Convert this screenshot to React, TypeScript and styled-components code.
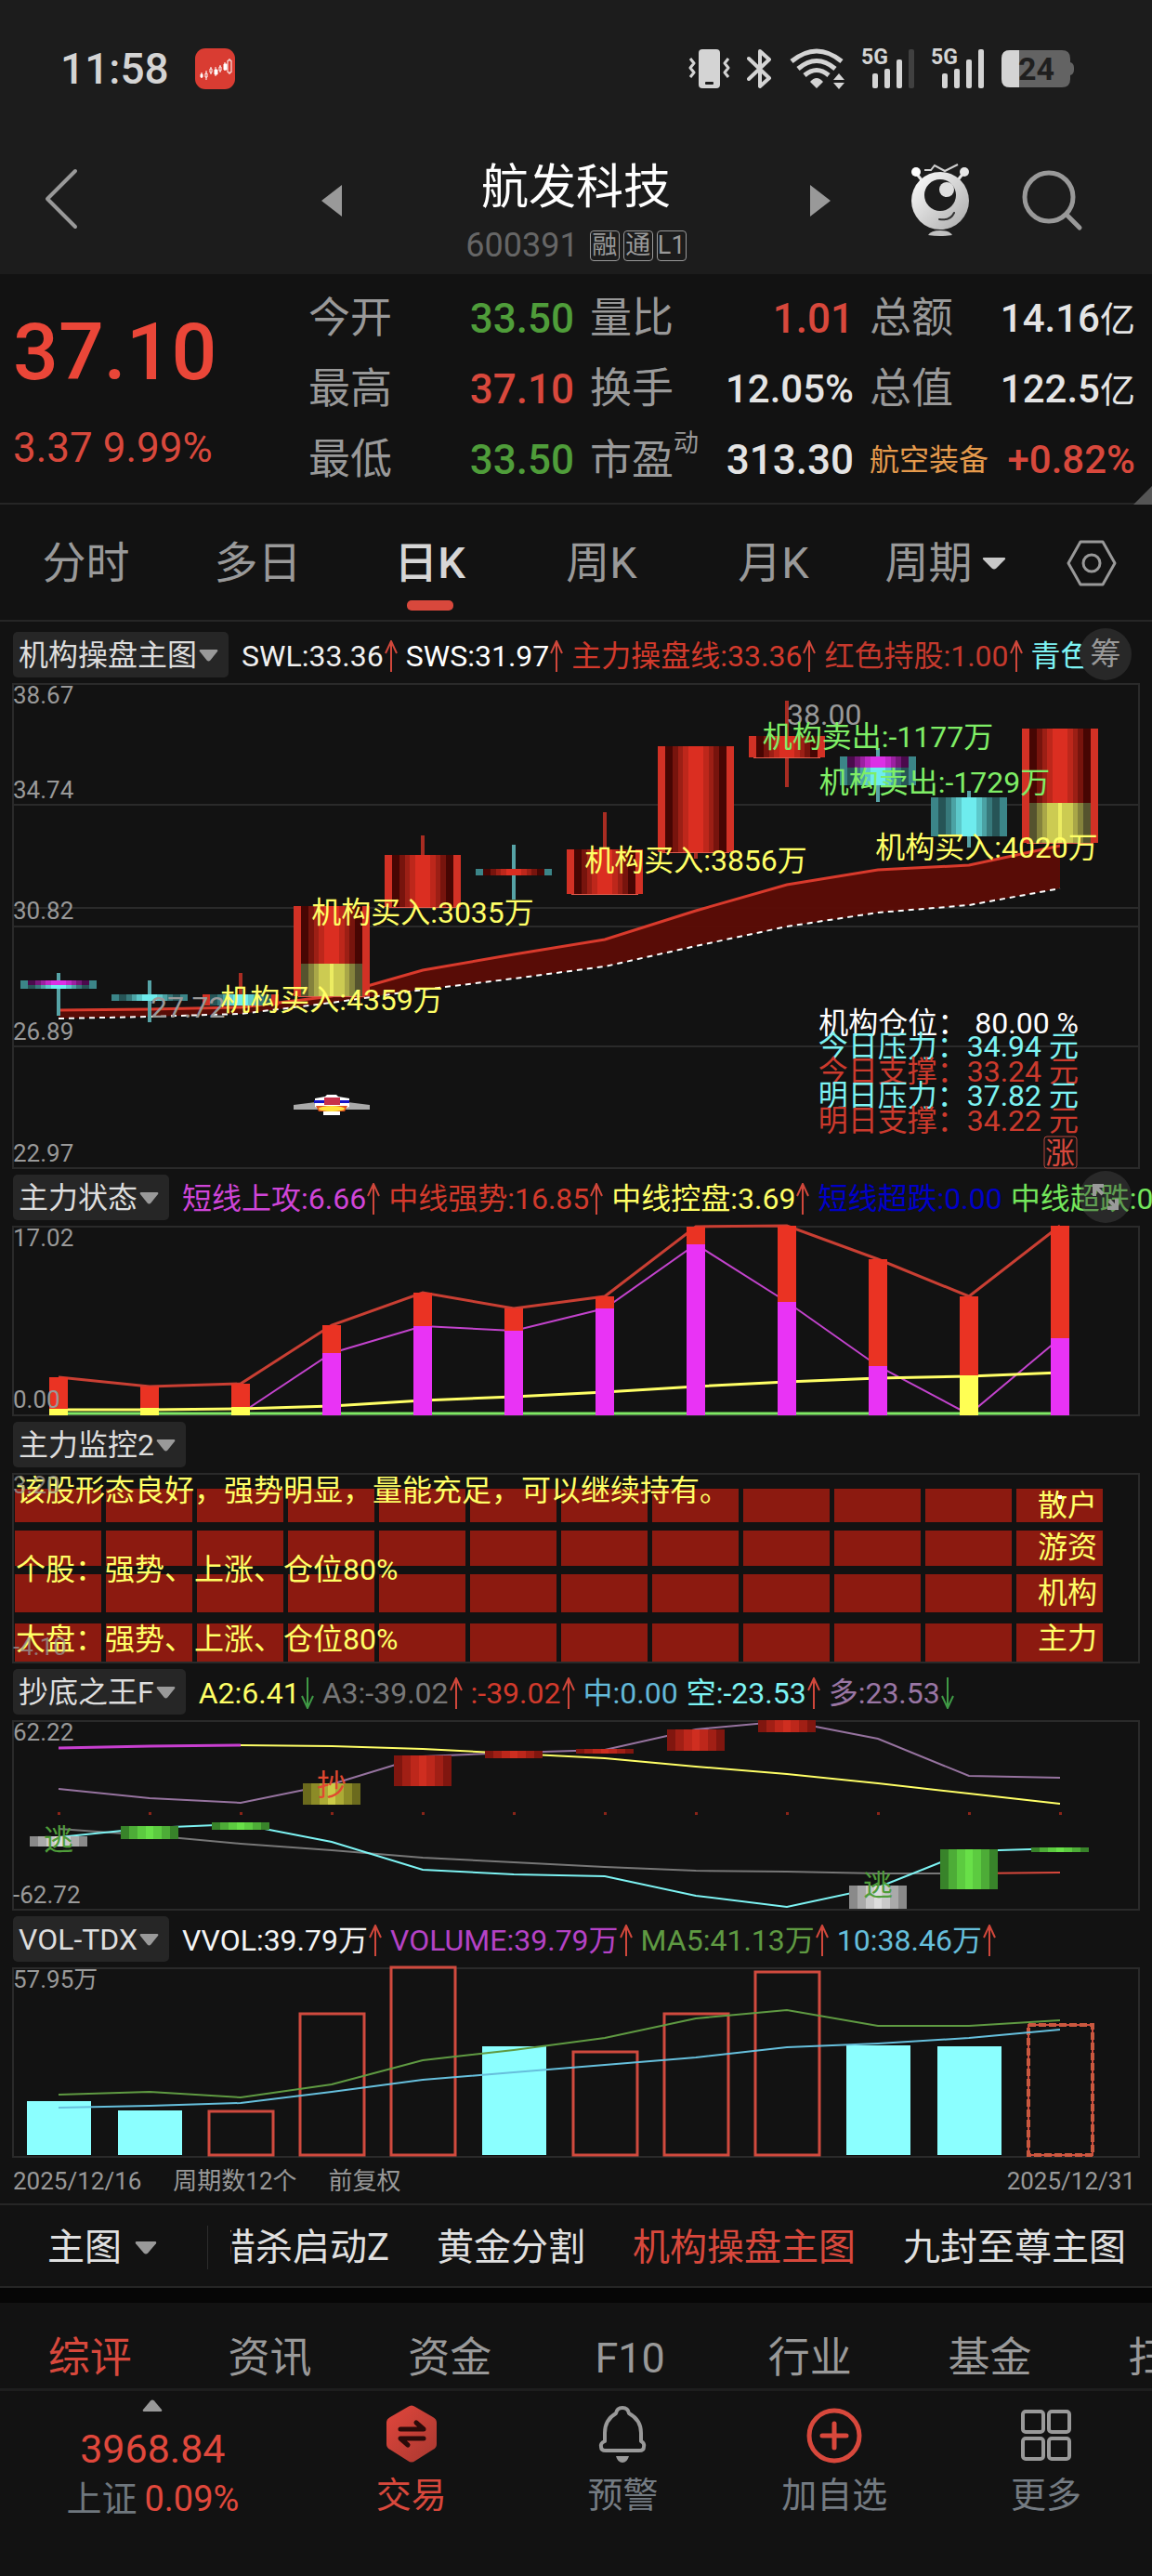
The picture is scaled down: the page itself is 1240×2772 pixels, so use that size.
import React from "react";
import styled, { createGlobalStyle, css } from "styled-components";

const GlobalStyle = createGlobalStyle`
  *, *::before, *::after { box-sizing: border-box; }
  body {
    margin: 0;
    background: #121212;
    color: #e0e0e0;
    font-family: Roboto, "Noto Sans CJK SC", sans-serif;
  }
  button {
    margin: 0;
    padding: 0;
    border: 0;
    background: none;
    color: inherit;
    font: inherit;
    cursor: pointer;
  }
  svg { display: block; flex: none; }
`;

const RED = "#d8483c";
const GREEN = "#4f9d3a";
const GREY = "#999999";
const YELLOW = "#ffff66";
const CYAN = "#7df3f3";
const LINE = "#262626";

/* ---------- status bar and title ---------- */

const Top = styled.header`
  background: #1c1c1c;
`;

const StatusBar = styled.div`
  display: flex;
  align-items: center;
  height: 148px;
  padding: 0 84px 0 65px;
  color: #d4d4d4;
`;

const Clock = styled.time`
  font-size: 46px;
  line-height: 54px;
  font-weight: 500;
  margin-right: 28px;
`;

const StatusIcons = styled.div`
  display: flex;
  align-items: center;
  gap: 18px;
  margin-left: auto;
`;

const TitleBar = styled.div`
  display: grid;
  grid-template-columns: 1fr 548px 1fr;
  align-items: center;
  height: 147px;
  padding-bottom: 11px;
`;

const BackCell = styled.div`
  padding-left: 48px;
`;

const TitleCell = styled.div`
  display: flex;
  align-items: center;
  justify-content: space-between;
`;

const TitleBlock = styled.div`
  padding-top: 24px;
`;

const ActionCell = styled.div`
  display: flex;
  align-items: center;
  gap: 56px;
  padding-left: 86px;
`;

const StockName = styled.h1`
  margin: 0;
  color: #ffffff;
  font-size: 51px;
  line-height: 60px;
  font-weight: 400;
  text-align: center;
`;

const CodeRow = styled.div`
  display: flex;
  align-items: center;
  justify-content: center;
  gap: 4px;
  margin-top: 12px;
  color: #666666;
  font-size: 36px;
  line-height: 40px;
`;

const Code = styled.span`
  margin-right: 8px;
`;

const Tag = styled.span`
  width: 32px;
  height: 33px;
  border: 1px solid ${GREY};
  border-radius: 4px;
  color: ${GREY};
  font-size: 27px;
  line-height: 31px;
  text-align: center;
`;

/* ---------- quote panel ---------- */

const Quote = styled.section`
  position: relative;
  display: flex;
  height: 248px;
  border-bottom: 2px solid ${LINE};
`;

const PriceBlock = styled.div`
  flex: none;
  width: 332px;
  padding: 34px 0 0 14px;
  color: ${RED};
`;

const Price = styled.div`
  color: #ea4638;
  font-size: 86px;
  line-height: 100px;
  font-weight: 500;
`;

const Change = styled.div`
  margin-top: 28px;
  font-size: 44px;
  line-height: 50px;
`;

const Stats = styled.dl`
  flex: 1;
  display: grid;
  grid-template-columns: 286fr 284fr 286fr;
  grid-auto-rows: 76px;
  column-gap: 17px;
  margin: 0;
  padding: 10px 18px 0 0;
`;

const Stat = styled.div`
  display: flex;
  align-items: center;
  justify-content: space-between;
`;

const StatLabel = styled.dt<{ $accent?: boolean }>`
  color: ${(p) => (p.$accent ? "#e59a4c" : GREY)};
  font-size: ${(p) => (p.$accent ? 32 : 45)}px;
  line-height: 60px;
  white-space: nowrap;

  sup {
    font-size: 27px;
    line-height: 27px;
    vertical-align: 25px;
  }
`;

const StatValue = styled.dd<{ $color?: string; $small?: boolean }>`
  margin: 0;
  color: ${(p) => p.$color ?? "#e4e4e4"};
  font-size: ${(p) => (p.$small ? 42 : 44)}px;
  line-height: 60px;
  font-weight: 500;
  white-space: nowrap;

  small { font-size: 38px; font-weight: 400; }
`;

const Corner = styled.i`
  position: absolute;
  right: 0;
  bottom: -2px;
  border-left: 20px solid transparent;
  border-bottom: 20px solid #555555;
`;

/* ---------- period tabs ---------- */

const Periods = styled.nav`
  display: grid;
  grid-template-columns: repeat(6, 185fr) 130fr;
  height: 126px;
  border-bottom: 2px solid ${LINE};
`;

const Period = styled.button<{ $active?: boolean }>`
  position: relative;
  display: flex;
  align-items: center;
  justify-content: center;
  gap: 10px;
  padding-top: 2px;
  color: ${(p) => (p.$active ? "#d6d6d6" : GREY)};
  font-size: 47px;
  line-height: 60px;
  font-weight: ${(p) => (p.$active ? 500 : 400)};

  ${(p) =>
    p.$active &&
    css`
      &::after {
        content: "";
        position: absolute;
        left: 50%;
        bottom: 10px;
        width: 50px;
        height: 11px;
        margin-left: -25px;
        border-radius: 5px;
        background: ${RED};
      }
    `}
`;

/* ---------- indicator panels ---------- */

const PanelHead = styled.div<{ $first?: boolean }>`
  position: relative;
  display: flex;
  align-items: center;
  gap: 14px;
  height: ${(p) => (p.$first ? 66 : 62)}px;
  padding: ${(p) => (p.$first ? 4 : 0)}px 0 0 14px;
  overflow: hidden;
`;

const Picker = styled.button`
  flex: none;
  display: flex;
  align-items: center;
  gap: 2px;
  height: 49px;
  padding: 2px 11px 0 6px;
  border-radius: 5px;
  background: #262626;
  color: #dddddd;
  font-size: 32px;
  line-height: 47px;
  white-space: nowrap;
`;

const Readouts = styled.div`
  display: flex;
  align-items: center;
  gap: 9px;
  min-width: 0;
  padding-top: 3px;
`;

const Readout = styled.span<{ $color: string }>`
  flex: none;
  display: flex;
  align-items: center;
  gap: 1px;
  color: ${(p) => p.$color};
  font-size: 32px;
  line-height: 48px;
  white-space: nowrap;
`;

const RoundButton = styled.button<{ $glass?: boolean }>`
  position: absolute;
  right: 22px;
  top: ${(p) => (p.$glass ? 3 : 7)}px;
  display: grid;
  place-items: center;
  width: 56px;
  height: 56px;
  border-radius: 50%;
  background: ${(p) => (p.$glass ? "rgba(70, 70, 70, 0.45)" : "#282828")};
  color: ${GREY};
  font-size: 33px;
  line-height: 56px;
`;

const Chart = styled.svg`
  width: 100%;
  height: auto;
  overflow: visible;
  font-size: 32px;
`;

const AxisText = styled.text`
  fill: ${GREY};
  font-size: 26px;
`;

const Note = styled.text`
  white-space: pre;
`;

const ChartFoot = styled.div`
  display: flex;
  align-items: center;
  gap: 34px;
  height: 52px;
  padding: 2px 18px 0 14px;
  border-bottom: 2px solid ${LINE};
  color: ${GREY};
  font-size: 26px;
  line-height: 40px;

  span:last-child { margin-left: auto; }
`;

/* ---------- lower bars ---------- */

const TemplateBar = styled.div`
  display: flex;
  align-items: center;
  height: 89px;
  padding-top: 4px;
  border-bottom: 2px solid ${LINE};
  font-size: 40px;
  line-height: 60px;
  color: #e0e0e0;
`;

const TemplateMenu = styled.button`
  flex: none;
  display: flex;
  align-items: center;
  gap: 14px;
  width: 224px;
  height: 47px;
  padding-left: 51px;
  border-right: 1px solid #2c2c2c;
`;

const TemplateScroll = styled.div`
  flex: 1;
  min-width: 0;
  margin-left: 24px;
  overflow: hidden;
`;

const TemplateTrack = styled.div`
  display: flex;
  gap: 51px;
  margin-left: -13px;
`;

const Template = styled.button<{ $active?: boolean }>`
  flex: none;
  color: ${(p) => (p.$active ? RED : "inherit")};
  white-space: nowrap;
`;

const Divider = styled.div`
  height: 16px;
  background: #060606;
`;

const InfoTabs = styled.nav`
  display: flex;
  height: 95px;
  padding-top: 28px;
  border-bottom: 3px solid #1e1e1e;
  overflow: hidden;
`;

const InfoTab = styled.button<{ $active?: boolean }>`
  flex: 0 0 calc(100% / 6.4);
  height: 64px;
  color: ${(p) => (p.$active ? RED : GREY)};
  font-size: 45px;
  line-height: 64px;
  white-space: nowrap;
`;

const BottomNav = styled.nav`
  display: grid;
  grid-template-columns: 329fr repeat(4, 228fr);
  height: 199px;
`;

const IndexButton = styled.button`
  display: flex;
  flex-direction: column;
  align-items: center;
  padding-top: 9px;
  color: #e0483c;
  font-size: 38px;
  line-height: 54px;

  strong {
    margin-top: 13px;
    font-size: 43px;
    font-weight: 400;
  }
  em { color: #6f777e; font-style: normal; margin-right: 8px; }
`;

const NavButton = styled.button<{ $active?: boolean }>`
  display: flex;
  flex-direction: column;
  align-items: center;
  gap: 5px;
  padding-top: 13px;
  color: ${(p) => (p.$active ? RED : "#747b82")};
  font-size: 38px;
  line-height: 56px;
`;

/* ---------- small drawings ---------- */

const Caret = ({ w = 21, h = 13, up = false, fill = GREY }) => (
  <svg width={w} height={h} viewBox="0 0 22 13" preserveAspectRatio="none" aria-hidden="true">
    <path
      d={up ? "M9 1.500Q11 -.5 13 1.500L21 11Q22 13 20 13H2Q0 13 1 11Z" : "M2 0H20Q22 0 21 2L13 11.500Q11 13.500 9 11.500L1 2Q0 0 2 0Z"}
      fill={fill}
    />
  </svg>
);

const Arrow = ({ down = false }) => (
  <svg width="14" height="34" viewBox="0 0 14 34" aria-hidden="true">
    <path
      d={down ? "M7 0V33M1 20L7 33L13 20" : "M7 34V1M1 14L7 1L13 14"}
      fill="none"
      stroke={down ? "#3f9a45" : "#d0473b"}
      strokeWidth="2"
    />
  </svg>
);

const AppBadge = () => (
  <svg width="43" height="44" viewBox="0 0 43 44" role="img" aria-label="行情">
    <rect width="43" height="44" rx="11" fill="#d93c32" />
    <g stroke="#fff" strokeWidth="1">
      <path d="M7 26V32M12 24V34M17 20V28M22 20V30M27 18V26M32 15V24M37 11V28" />
      <path d="M6 28h2v3h-2zM21 23h3v5h-3zM31 17h3v6h-3z" fill="#fff" />
      <path d="M11 27h2v4h-2zM16 22h2v4h-2zM26 20h2v4h-2zM35 13h4v13h-4z" fill="#d93c32" />
    </g>
  </svg>
);

const VibrateIcon = () => (
  <svg width="45" height="44" viewBox="0 0 45 44" aria-hidden="true">
    <rect x="11" y="1" width="23" height="42" rx="4" fill="#d4d4d4" />
    <rect x="18" y="36" width="9" height="3" rx="1" fill="#1c1c1c" />
    <path d="M2 11l4 5-4 5 4 5-4 5M43 11l-4 5 4 5-4 5 4 5" fill="none" stroke="#d4d4d4" strokeWidth="3" strokeLinejoin="round" />
  </svg>
);

const BluetoothIcon = () => (
  <svg width="28" height="44" viewBox="0 0 28 44" aria-hidden="true">
    <path d="M2 11L24 32L14 41V3L24 12L2 33" fill="none" stroke="#d4d4d4" strokeWidth="4" strokeLinejoin="round" strokeLinecap="round" />
  </svg>
);

const WifiIcon = () => (
  <svg width="60" height="44" viewBox="0 0 60 44" aria-hidden="true">
    <g fill="none" stroke="#d4d4d4" strokeWidth="5">
      <path d="M2 14Q29 -8 56 14" />
      <path d="M9 22Q29 5 49 22" />
      <path d="M16 29Q29 18 42 29" />
    </g>
    <path d="M22 36Q29 28 36 36L29 43ZM47 34h12l-6 -7ZM47 37h12l-6 7Z" fill="#d4d4d4" />
  </svg>
);

const SignalText = styled.text`
  font-size: 23px;
  font-weight: 700;
  fill: #d4d4d4;
`;

const SignalIcon = ({ full = false }) => (
  <svg width="57" height="44" viewBox="0 0 57 44" overflow="visible" aria-hidden="true">
    <SignalText x="-1" y="17">5G</SignalText>
    <g fill="#d4d4d4">
      <rect x="11" y="27" width="6" height="16" rx="2" />
      <rect x="24" y="22" width="6" height="21" rx="2" />
      <rect x="37" y="12" width="6" height="31" rx="2" />
      <rect x="50" y="1" width="6" height="42" rx="2" opacity={full ? 1 : 0.2} />
    </g>
  </svg>
);

const BatteryText = styled.text`
  font-size: 34px;
  font-weight: 700;
  fill: #1f1f1f;
`;

const BatteryIcon = () => (
  <svg width="78" height="42" viewBox="0 0 78 42" role="img" aria-label="24%">
    <path d="M9 1H65Q74 1 74 10V14Q78 15 78 20V22Q78 27 74 28V32Q74 41 65 41H9Q0 41 0 32V10Q0 1 9 1Z" fill="#636363" />
    <path d="M19 1H9Q0 1 0 10V32Q0 41 9 41H19Z" fill="#d4d4d4" />
    <BatteryText x="18" y="33">24</BatteryText>
  </svg>
);

const BackIcon = () => (
  <svg width="36" height="66" viewBox="0 0 36 66" aria-hidden="true">
    <path d="M33 3L3 33L33 63" fill="none" stroke={GREY} strokeWidth="4" strokeLinecap="round" strokeLinejoin="round" />
  </svg>
);

const SideTriangle = ({ right = false }) => (
  <svg width="22" height="34" viewBox="0 0 22 34" aria-hidden="true">
    <path d={right ? "M0 0L22 17L0 34Z" : "M22 0L0 17L22 34Z"} fill={GREY} />
  </svg>
);

const RobotIcon = () => (
  <svg width="64" height="80" viewBox="0 0 64 80" aria-hidden="true">
    <defs>
      <linearGradient id="shell" x1="0" y1="0" x2="1" y2="1">
        <stop offset="0" stopColor="#ffffff" />
        <stop offset="1" stopColor="#a9a9a9" />
      </linearGradient>
    </defs>
    <path d="M5 9L13 19M58 9L50 19" stroke="#e8e8e8" strokeWidth="3" />
    <circle cx="6" cy="9" r="5" fill="#fff" />
    <circle cx="58" cy="9" r="5" fill="#e6e6e6" />
    <path d="M15 7h7l4 -5l11 6l14 -7" fill="none" stroke="#cfcfcf" strokeWidth="2" />
    <circle cx="32" cy="40" r="31" fill="url(#shell)" />
    <circle cx="32" cy="34" r="17" fill="#1c1c1c" />
    <circle cx="39" cy="28" r="8" fill="#dedede" />
    <path d="M31 60Q43 62 47 53" fill="none" stroke="#333" strokeWidth="2" strokeLinecap="round" />
    <path d="M19 77Q22 72 32 72Q42 72 45 77Q32 79 19 77Z" fill="#c0c0c0" />
  </svg>
);

const SearchIcon = () => (
  <svg width="66" height="66" viewBox="0 0 66 66" aria-hidden="true">
    <circle cx="29" cy="29" r="26" fill="none" stroke={GREY} strokeWidth="5" />
    <path d="M48 48L62 62" stroke={GREY} strokeWidth="5" strokeLinecap="round" />
  </svg>
);

const HexIcon = () => (
  <svg width="54" height="50" viewBox="0 0 54 50" aria-hidden="true">
    <path d="M15 2H39L52 25L39 48H15L2 25Z" fill="none" stroke={GREY} strokeWidth="3" strokeLinejoin="round" />
    <circle cx="27" cy="25" r="9" fill="none" stroke={GREY} strokeWidth="3" />
  </svg>
);

const ExpandIcon = () => (
  <svg width="32" height="32" viewBox="0 0 32 32" aria-hidden="true">
    <path d="M4 15V4H14M4 4L13 13M28 18V28H18M28 28L20 20" fill="none" stroke="#9a9a9a" strokeWidth="4" />
  </svg>
);

const TradeIcon = () => (
  <svg width="56" height="66" viewBox="0 0 56 66" aria-hidden="true">
    <defs>
      <linearGradient id="trade" x1="0" y1="0" x2="1" y2="1">
        <stop offset="0" stopColor="#e2463c" />
        <stop offset="1" stopColor="#a83830" />
      </linearGradient>
    </defs>
    <path d="M24 4Q28 1 32 4L51 15Q55 17 55 21V44Q55 48 51 50L32 62Q28 65 24 62L5 50Q1 48 1 44V21Q1 17 5 15Z" fill="url(#trade)" />
    <path d="M16 28H41L33 21M41 38H16L24 45" fill="none" stroke="#2a0b09" strokeWidth="5" strokeLinecap="round" strokeLinejoin="round" />
  </svg>
);

const BellIcon = () => (
  <svg width="54" height="66" viewBox="0 0 54 66" aria-hidden="true">
    <path
      d="M20 11Q21 5 27 5T34 11Q47 18 47 32V41Q51 43 50 47Q50 51 45 51H9Q4 51 4 47Q3 43 8 41V32Q8 18 20 11Z"
      fill="none"
      stroke={GREY}
      strokeWidth="4"
      strokeLinejoin="round"
    />
    <path d="M20 57H34Q32 64 27 64T20 57Z" fill={GREY} />
  </svg>
);

const AddIcon = () => (
  <svg width="60" height="66" viewBox="0 0 60 66" aria-hidden="true">
    <circle cx="30" cy="35" r="27" fill="none" stroke={RED} strokeWidth="5" />
    <path d="M30 22V48M17 35H43" stroke={RED} strokeWidth="5" strokeLinecap="round" />
  </svg>
);

const GridIcon = () => (
  <svg width="56" height="66" viewBox="0 0 56 66" aria-hidden="true">
    <g fill="none" stroke={GREY} strokeWidth="4">
      <rect x="3" y="9" width="22" height="22" rx="3" />
      <rect x="31" y="9" width="22" height="22" rx="3" />
      <rect x="3" y="38" width="22" height="22" rx="3" />
      <rect x="31" y="38" width="22" height="22" rx="3" />
    </g>
  </svg>
);

/* ---------- charts ---------- */

const cx = (i: number) => 63 + 98 * i;
const path = (ys: number[], from = 0) => ys.map((y, i) => `${i ? "L" : "M"}${cx(i + from)} ${y}`).join("");

const Frame = ({ height, lines = [] as number[] }) => (
  <g fill="none" stroke="#2a2a2a" strokeWidth="2" shapeRendering="crispEdges">
    <rect x="14" y="1" width="1212" height={height - 1} />
    {lines.map((y) => (
      <path key={y} d={`M14 ${y}H1226`} />
    ))}
  </g>
);

const TONES: Record<string, string[]> = {
  red: ["#470603", "#77140d", "#9c1f15", "#bd271b", "#db2e21"],
  cyan: ["#265456", "#37797b", "#4ba2a4", "#5cc8ca", "#6eecee"],
  magenta: ["#4a0a4c", "#76187a", "#9c20a2", "#c02ac8", "#dc30e6"],
  yellow: ["#55532e", "#84823c", "#a9a748", "#cccb52", "#cccb52"],
};
const EDGE: Record<string, string> = { red: "#d23125", cyan: "#3b8588" };

type Fill = [tone: string, top: number, bottom: number];
type Candle = { edge: "red" | "cyan"; wick?: [number, number]; fills: Fill[] };

const candles: Candle[] = [
  { edge: "cyan", wick: [312, 358], fills: [["magenta", 320, 325], ["cyan", 325, 329]] },
  { edge: "cyan", wick: [320, 365], fills: [["cyan", 335, 342]] },
  { edge: "red", wick: [312, 335], fills: [["cyan", 335, 347]] },
  { edge: "red", fills: [["red", 240, 302], ["yellow", 302, 337]] },
  { edge: "red", wick: [164, 185], fills: [["red", 185, 241]] },
  { edge: "cyan", wick: [174, 233], fills: [["red", 200, 207]] },
  { edge: "red", wick: [139, 179], fills: [["red", 179, 227]] },
  { edge: "red", wick: [68, 189], fills: [["red", 68, 182]] },
  { edge: "red", wick: [19, 112], fills: [["red", 57, 80]] },
  { edge: "cyan", wick: [70, 128], fills: [["magenta", 79, 91], ["cyan", 91, 110]] },
  { edge: "cyan", wick: [116, 177], fills: [["cyan", 123, 165]] },
  { edge: "red", fills: [["red", 49, 129], ["yellow", 129, 172]] },
];

const CandleMark = ({ c, x }: { c: Candle; x: number }) => {
  const top = c.fills[0][1];
  const bottom = c.fills[c.fills.length - 1][2];
  return (
    <g>
      {c.wick && <rect x={x - 2} y={c.wick[0]} width="4" height={c.wick[1] - c.wick[0]} fill={c.edge === "red" ? "#a82c22" : "#56a3a6"} />}
      <rect x={x - 41} y={top} width="82" height={bottom - top} fill={EDGE[c.edge]} />
      {c.fills.map(([tone, y1, y2]) =>
        [33, 25, 19, 14, 8].map((half, n) => (
          <rect key={tone + half} x={x - half} y={y1} width={half * 2} height={y2 - y1} fill={TONES[tone][n]} />
        ))
      )}
      {c.fills.some((f) => f[0] === "yellow") && (
        <rect x={x - 2} y={c.fills[1][1]} width="4" height={bottom - c.fills[1][1]} fill="#ecec62" />
      )}
      {c.edge === "red" && bottom - top > 15 && <rect x={x - 36} y={bottom} width="72" height="1" fill="#e05a4c" />}
    </g>
  );
};

const upper = [352, 351, 349, 337, 309, 292, 276, 245, 217, 201, 196, 175];
const lower = [361, 359, 356, 344, 330, 318, 305, 283, 262, 247, 239, 221];

const MainChart = () => (
  <Chart viewBox="0 0 1240 522" role="img" aria-label="日K线图">
    <Frame height={522} lines={[131, 242, 262, 391]} />
    <path
      d={`${path(upper)}${[...lower].reverse().map((y, i) => `L${cx(11 - i)} ${y}`).join("")}Z`}
      fill="#5c0c06"
      fillOpacity="0.96"
    />
    <path d={path(lower)} fill="none" stroke="#fff" strokeWidth="2" strokeDasharray="6 5" />
    <path d={path(upper)} fill="none" stroke="#d93a2c" strokeWidth="3" />
    {candles.map((c, i) => (
      <CandleMark key={i} c={c} x={cx(i)} />
    ))}
    <AxisText x="14" y="22">38.67</AxisText>
    <AxisText x="14" y="124">34.74</AxisText>
    <AxisText x="14" y="254">30.82</AxisText>
    <AxisText x="14" y="384">26.89</AxisText>
    <AxisText x="14" y="515">22.97</AxisText>
    <text x="162" y="360" fill={GREY}>27.72</text>
    <text x="847" y="45" fill={GREY}>38.00</text>
    <g textAnchor="middle" fill={YELLOW}>
      <Note x="357" y="352">机构买入:4359万</Note>
      <Note x="455" y="258">机构买入:3035万</Note>
      <Note x="749" y="202">机构买入:3856万</Note>
      <Note x="1062" y="188">机构买入:4020万</Note>
    </g>
    <g textAnchor="middle" fill="#7fee66">
      <Note x="945" y="69">机构卖出:-1177万</Note>
      <Note x="1006" y="118">机构卖出:-1729万</Note>
    </g>
    <g textAnchor="end">
      <Note x="1161" y="377" fill="#ffffff">{"机构仓位： 80.00 %"}</Note>
      <Note x="1161" y="402" fill={CYAN}>今日压力：34.94 元</Note>
      <Note x="1161" y="429" fill="#cc3a2d">今日支撑：33.24 元</Note>
      <Note x="1161" y="455" fill={CYAN}>明日压力：37.82 元</Note>
      <Note x="1161" y="482" fill="#cc3a2d">明日支撑：34.22 元</Note>
    </g>
    <rect x="1124" y="488" width="35" height="34" rx="3" fill="none" stroke="#b5473e" />
    <text x="1141" y="517" textAnchor="middle" fill={RED}>涨</text>
    <g>
      <path d="M316 454L340 451H374L398 454V459H316Z" fill="#a9a9a9" />
      <path d="M339 447L350 445L352 443H362L364 445L376 447V456L366 460V465H348V460L339 456Z" fill="#fff" />
      <rect x="338" y="449" width="38" height="3" fill="#1414c8" />
      <rect x="349" y="446" width="17" height="8" fill="#c8324a" />
      <path d="M340 455H374L371 461H343Z" fill="#e0521e" />
      <ellipse cx="357" cy="458" rx="14" ry="3" fill="#ffe23c" />
    </g>
  </Chart>
);

const force = [163, 173, 170, 107, 72, 89, 76, 1, 0, 36, 76, 0];
const rush: Record<number, number> = { 3: 137, 4: 108, 5: 113, 6: 89, 7: 20, 8: 82, 9: 151, 11: 121 };
const hold: Record<number, number> = { 0: 197, 1: 196, 2: 195, 10: 161 };

const ForceChart = () => (
  <Chart viewBox="0 0 1240 204" role="img" aria-label="主力状态">
    <Frame height={204} />
    <g fill="none">
      <path d="M63 202H1141" stroke="#7fe864" strokeWidth="3" />
      <path d={path(force)} stroke="#c93f33" strokeWidth="3" />
      <path d={path([202, 137, 108, 113, 89, 20, 82, 151, 203, 121], 2)} stroke="#c243cc" strokeWidth="2" />
      <path d={path([198, 198, 197, 194, 188, 184, 179, 173, 168, 164, 162, 158])} stroke={YELLOW} strokeWidth="3" />
    </g>
    {force.map((y, i) => (
      <g key={i}>
        <rect x={cx(i) - 10} y={y} width="20" height={204 - y} fill="#ea3323" />
        {rush[i] && <rect x={cx(i) - 10} y={rush[i]} width="20" height={204 - rush[i]} fill="#e933f5" />}
        {hold[i] && <rect x={cx(i) - 10} y={hold[i]} width="20" height={204 - hold[i]} fill="#ffff54" />}
      </g>
    ))}
    <AxisText x="14" y="22">17.02</AxisText>
    <AxisText x="14" y="196">0.00</AxisText>
  </Chart>
);

const bands = [[17, 36], [62, 38], [109, 41], [162, 41]];

const MonitorChart = () => (
  <Chart viewBox="0 0 1240 204" role="img" aria-label="主力监控">
    <Frame height={204} />
    {bands.map(([y, h]) =>
      candles.map((_, i) => <rect key={`${y}-${i}`} x={cx(i) - 47} y={y} width="93" height={h} fill="#8c1a10" />)
    )}
    <g fill={YELLOW}>
      <Note x="17" y="30">该股形态良好，强势明显，量能充足，可以继续持有。</Note>
      <Note x="17" y="115">个股：强势、上涨、仓位80%</Note>
      <Note x="17" y="190">大盘：强势、上涨、仓位80%</Note>
      <Note x="1117" y="46">散户</Note>
      <Note x="1117" y="91">游资</Note>
      <Note x="1117" y="140">机构</Note>
      <Note x="1117" y="189">主力</Note>
    </g>
    <g opacity="0.75">
      <AxisText x="14" y="22">3.20</AxisText>
      <AxisText x="14" y="196">-4.10</AxisText>
    </g>
    <rect x="1139" y="24" width="4" height="4" fill="#fff" />
  </Chart>
);

const BLOCK: Record<string, string[]> = {
  white: ["#8a8a8a", "#aaaaaa", "#cacaca", "#dddddd"],
  green: ["#38832a", "#4dac37", "#5ccb40", "#68e048"],
  yellow: ["#6b6a1d", "#8c8b27", "#acab35", "#cbcb47"],
  red: ["#80160f", "#a11f15", "#bd271b", "#cf2e20"],
};
const blocks: Fill[] = [
  ["white", 125, 136], ["green", 114, 128], ["green", 110, 118], ["yellow", 68, 91],
  ["red", 38, 71], ["red", 33, 41], ["red", 31, 36], ["red", 10, 33],
  ["red", 0, 13], ["white", 178, 203], ["green", 139, 182], ["green", 137, 142],
];

const BottomChart = () => (
  <Chart viewBox="0 0 1240 204" role="img" aria-label="抄底之王">
    <Frame height={204} />
    <g fill="none" strokeWidth="2">
      <path d={path([117, 124, 133, 140, 148, 153, 158, 162, 163, 165, 165])} stroke="#777" />
      <path d={path([165, 164], 10)} stroke={RED} />
      <path d={path([74, 84, 89, 69, 39, 35, 32, 10, 1, 20, 60, 62])} stroke="#96739f" />
      <path d={path([126, 116, 112, 131, 161, 166, 168, 189, 201, 180, 141, 138])} stroke={CYAN} />
      <path d={path([30, 28, 27])} stroke="#c83fd0" strokeWidth="3" />
      <path d={path([27, 28, 31, 36, 41, 50, 58, 68, 79, 90], 2)} stroke={YELLOW} />
    </g>
    {blocks.map(([tone, y1, y2], i) => (
      <g key={i}>
        <rect x={cx(i) - 1} y="99" width="3" height="3" fill="#8a2418" />
        {[31, 22, 13, 4].map((half, n) => (
          <rect key={half} x={cx(i) - half} y={y1} width={half * 2} height={y2 - y1} fill={BLOCK[tone][n]} />
        ))}
      </g>
    ))}
    <AxisText x="14" y="22">62.22</AxisText>
    <AxisText x="14" y="197">-62.72</AxisText>
    <g textAnchor="middle">
      <text x="63" y="140" fill={GREEN}>逃</text>
      <text x="357" y="81" fill="#e04830">抄</text>
      <text x="945" y="189" fill={GREEN}>逃</text>
    </g>
  </Chart>
);

const volumes: [up: boolean, top: number][] = [
  [false, 144], [false, 154], [true, 155], [true, 50], [true, 0], [false, 85],
  [true, 91], [true, 50], [true, 5], [false, 84], [false, 85], [true, 62],
];

const VolumeChart = () => (
  <Chart viewBox="0 0 1240 204" role="img" aria-label="成交量">
    <Frame height={204} />
    {volumes.map(([up, y], i) =>
      up ? (
        <rect
          key={i}
          x={cx(i) - 34}
          y={y}
          width="69"
          height={202 - y}
          fill="none"
          stroke="#d04a3e"
          strokeWidth={i === 11 ? 2 : 3}
        />
      ) : (
        <rect key={i} x={cx(i) - 34} y={y} width="69" height={202 - y} fill="#8bffff" />
      )
    )}
    <rect x={cx(11) - 34} y="62" width="69" height="140" fill="none" stroke="#c9583f" strokeWidth="4" strokeDasharray="8 3" />
    <g fill="none" strokeWidth="2">
      <path d={path([137, 134, 140, 126, 100, 89, 76, 55, 46, 63, 63, 57])} stroke="#5f9a42" />
      <path d={path([151, 149, 146, 134, 121, 113, 105, 97, 86, 82, 76, 67])} stroke="#66bfdc" />
    </g>
    <AxisText x="14" y="22">57.95万</AxisText>
  </Chart>
);

/* ---------- page ---------- */

type Item = [text: string, color: string, arrow?: "up" | "down"];

const Panel = ({ name, items = [], first, corner, children }: {
  name: string;
  items?: Item[];
  first?: boolean;
  corner?: React.ReactNode;
  children: React.ReactNode;
}) => (
  <section>
    <PanelHead $first={first}>
      <Picker type="button" aria-haspopup="listbox">
        {name}
        <Caret />
      </Picker>
      <Readouts>
        {items.map(([text, color, arrow]) => (
          <Readout key={text} $color={color}>
            {text}
            {arrow && <Arrow down={arrow === "down"} />}
          </Readout>
        ))}
      </Readouts>
      {corner}
    </PanelHead>
    {children}
  </section>
);

export default function App() {
  return (
    <>
      <GlobalStyle />
      <Top>
        <StatusBar>
          <Clock>11:58</Clock>
          <AppBadge />
          <StatusIcons>
            <VibrateIcon />
            <BluetoothIcon />
            <WifiIcon />
            <SignalIcon />
            <SignalIcon full />
            <BatteryIcon />
          </StatusIcons>
        </StatusBar>
        <TitleBar>
          <BackCell>
            <button type="button" aria-label="返回"><BackIcon /></button>
          </BackCell>
          <TitleCell>
            <button type="button" aria-label="上一只"><SideTriangle /></button>
            <TitleBlock>
              <StockName>航发科技</StockName>
              <CodeRow>
                <Code>600391</Code>
                <Tag>融</Tag>
                <Tag>通</Tag>
                <Tag>L1</Tag>
              </CodeRow>
            </TitleBlock>
            <button type="button" aria-label="下一只"><SideTriangle right /></button>
          </TitleCell>
          <ActionCell>
            <button type="button" aria-label="智能助手"><RobotIcon /></button>
            <button type="button" aria-label="搜索"><SearchIcon /></button>
          </ActionCell>
        </TitleBar>
      </Top>

      <main>
        <Quote>
          <PriceBlock>
            <Price>37.10</Price>
            <Change>3.37 9.99%</Change>
          </PriceBlock>
          <Stats>
            <Stat><StatLabel>今开</StatLabel><StatValue $color={GREEN}>33.50</StatValue></Stat>
            <Stat><StatLabel>量比</StatLabel><StatValue $color={RED}>1.01</StatValue></Stat>
            <Stat><StatLabel>总额</StatLabel><StatValue $small>14.16<small>亿</small></StatValue></Stat>
            <Stat><StatLabel>最高</StatLabel><StatValue $color={RED}>37.10</StatValue></Stat>
            <Stat><StatLabel>换手</StatLabel><StatValue $small>12.05%</StatValue></Stat>
            <Stat><StatLabel>总值</StatLabel><StatValue $small>122.5<small>亿</small></StatValue></Stat>
            <Stat><StatLabel>最低</StatLabel><StatValue $color={GREEN}>33.50</StatValue></Stat>
            <Stat><StatLabel>市盈<sup>动</sup></StatLabel><StatValue>313.30</StatValue></Stat>
            <Stat><StatLabel $accent>航空装备</StatLabel><StatValue $small $color={RED}>+0.82%</StatValue></Stat>
          </Stats>
          <Corner />
        </Quote>

        <Periods>
          <Period type="button">分时</Period>
          <Period type="button">多日</Period>
          <Period type="button" $active>日K</Period>
          <Period type="button">周K</Period>
          <Period type="button">月K</Period>
          <Period type="button">周期<Caret w={26} h={13} fill="#c8c8c8" /></Period>
          <Period type="button" aria-label="设置"><HexIcon /></Period>
        </Periods>

        <Panel
          first
          name="机构操盘主图"
          items={[
            ["SWL:33.36", "#f0f0f0", "up"],
            ["SWS:31.97", "#ffffff", "up"],
            ["主力操盘线:33.36", "#d23a2c", "up"],
            ["红色持股:1.00", "#c5392d", "up"],
            ["青色", CYAN],
          ]}
          corner={<RoundButton type="button">筹</RoundButton>}
        >
          <MainChart />
        </Panel>

        <Panel
          name="主力状态"
          items={[
            ["短线上攻:6.66", "#cf45d8", "up"],
            ["中线强势:16.85", "#d23a2c", "up"],
            ["中线控盘:3.69", YELLOW, "up"],
            ["短线超跌:0.00", "#0000c8"],
            ["中线超跌:0.00", "#74e65c"],
          ]}
          corner={<RoundButton type="button" $glass aria-label="全屏"><ExpandIcon /></RoundButton>}
        >
          <ForceChart />
        </Panel>

        <Panel name="主力监控2">
          <MonitorChart />
        </Panel>

        <Panel
          name="抄底之王F"
          items={[
            ["A2:6.41", YELLOW, "down"],
            ["A3:-39.02", "#777777", "up"],
            [":-39.02", "#d23a2c", "up"],
            ["中:0.00", "#62b8d8"],
            ["空:-23.53", CYAN, "up"],
            ["多:23.53", "#9a76a4", "down"],
          ]}
        >
          <BottomChart />
        </Panel>

        <Panel
          name="VOL-TDX"
          items={[
            ["VVOL:39.79万", "#f4f4f4", "up"],
            ["VOLUME:39.79万", "#b542c6", "up"],
            ["MA5:41.13万", "#5f9a42", "up"],
            ["10:38.46万", "#66bfdc", "up"],
          ]}
        >
          <VolumeChart />
        </Panel>

        <ChartFoot>
          <span>2025/12/16</span>
          <span>周期数12个</span>
          <span>前复权</span>
          <span>2025/12/31</span>
        </ChartFoot>

        <TemplateBar>
          <TemplateMenu type="button" aria-haspopup="menu">
            主图
            <Caret w={24} h={14} />
          </TemplateMenu>
          <TemplateScroll>
            <TemplateTrack>
              <Template type="button">猎杀启动Z</Template>
              <Template type="button">黄金分割</Template>
              <Template type="button" $active>机构操盘主图</Template>
              <Template type="button">九封至尊主图</Template>
            </TemplateTrack>
          </TemplateScroll>
        </TemplateBar>
        <Divider />
        <InfoTabs>
          {["综评", "资讯", "资金", "F10", "行业", "基金", "扫雷"].map((name, i) => (
            <InfoTab type="button" key={name} $active={i === 0}>{name}</InfoTab>
          ))}
        </InfoTabs>
      </main>

      <BottomNav>
        <IndexButton type="button">
          <Caret up w={22} h={13} />
          <strong>3968.84</strong>
          <span><em>上证</em>0.09%</span>
        </IndexButton>
        <NavButton type="button" $active><TradeIcon />交易</NavButton>
        <NavButton type="button"><BellIcon />预警</NavButton>
        <NavButton type="button"><AddIcon />加自选</NavButton>
        <NavButton type="button"><GridIcon />更多</NavButton>
      </BottomNav>
    </>
  );
}
